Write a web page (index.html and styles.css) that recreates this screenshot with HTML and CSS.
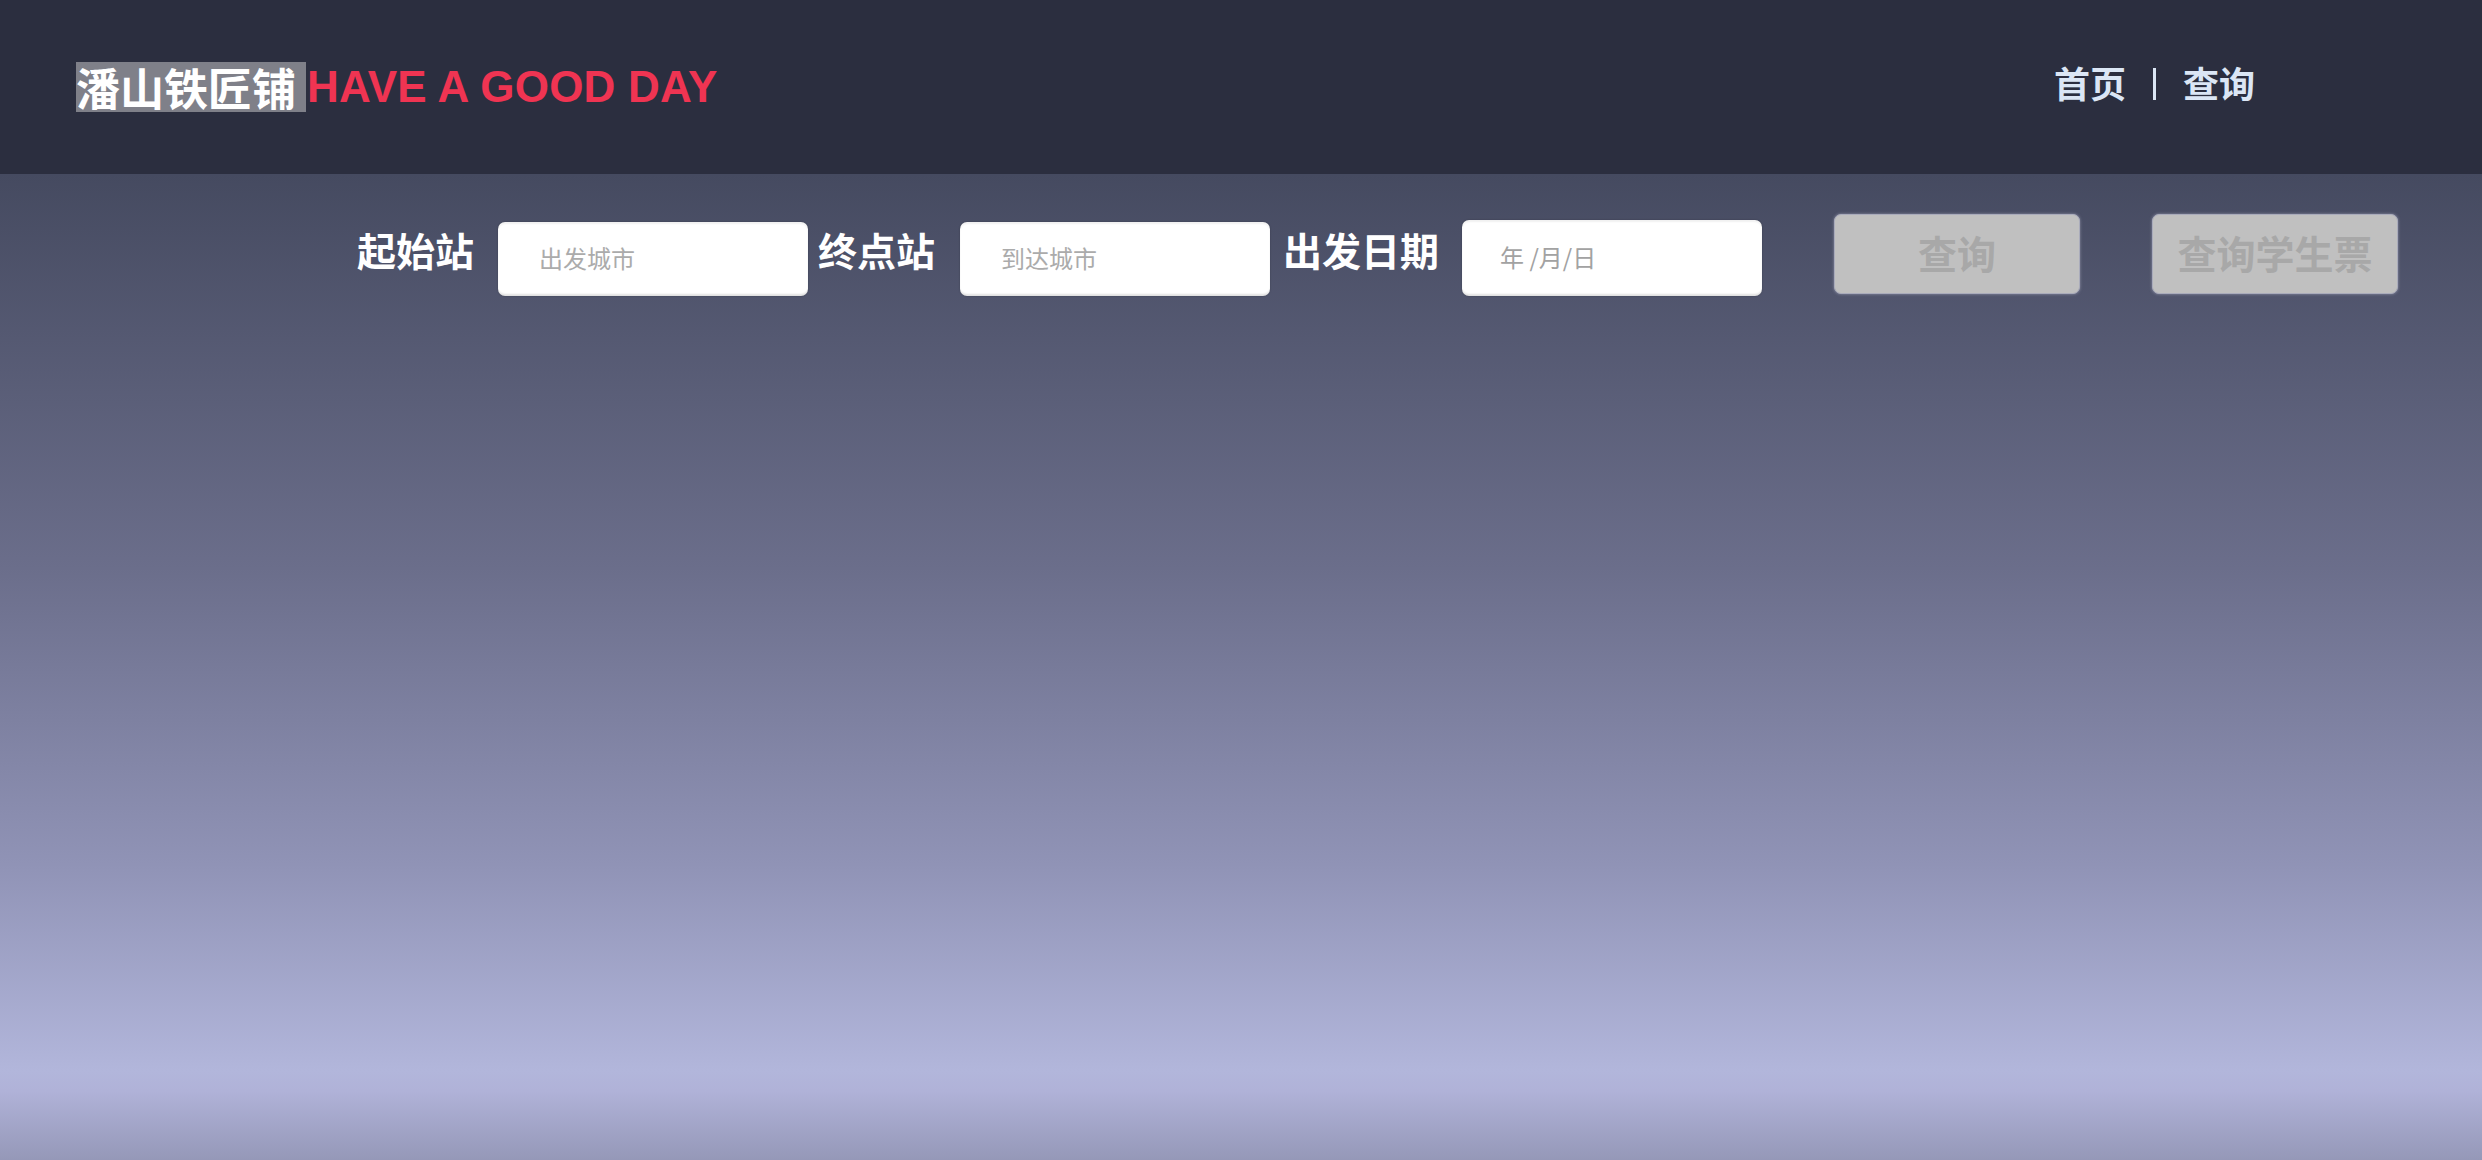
FILE: index.html
```html
<!DOCTYPE html>
<html lang="zh-CN">
<head>
<meta charset="utf-8">
<title>潘山铁匠铺</title>
<link rel="stylesheet" href="styles.css">
</head>
<body>
<header class="topbar">
  <div class="brand">
    <span class="brand-cn">潘山铁匠铺 </span><span class="brand-en">HAVE A GOOD DAY</span>
  </div>
  <nav class="nav">
    <a class="nav-link" href="#">首页</a>
    <span class="nav-sep"></span>
    <a class="nav-link" href="#">查询</a>
  </nav>
</header>
<main class="main">
  <form class="search">
    <label class="label label-from">起始站</label>
    <input class="field field-from" type="text" placeholder="出发城市">
    <label class="label label-to">终点站</label>
    <input class="field field-to" type="text" placeholder="到达城市">
    <label class="label label-date">出发日期</label>
    <input class="field field-date" type="text" placeholder="年 /月/日">
    <button class="btn btn-query" type="button">查询</button>
    <button class="btn btn-student" type="button">查询学生票</button>
  </form>
</main>
</body>
</html>
```

FILE: styles.css
```css
html, body {
  margin: 0;
  padding: 0;
}

body {
  font-family: "Noto Sans CJK SC", "Liberation Sans", sans-serif;
  background: #2b2e3f;
  height: 1160px;
  overflow: hidden;
}

.topbar {
  height: 174px;
  background: #2b2e3f;
  display: flex;
  align-items: center;
  justify-content: space-between;
  padding-left: 76px;
  box-sizing: border-box;
}

.brand {
  display: flex;
  align-items: flex-start;
  height: 50px;
}

.brand-cn {
  display: inline-block;
  height: 50px;
  line-height: 50px;
  font-size: 44px;
  font-weight: 700;
  color: #ffffff;
  background: #7f8089;
  white-space: pre;
  font-family: "Noto Sans CJK SC", sans-serif;
}

.brand-en {
  display: inline-block;
  height: 50px;
  line-height: 50px;
  font-size: 44px;
  font-weight: 700;
  color: #ef3452;
  font-family: "Liberation Sans", Arial, sans-serif;
  letter-spacing: 0.2px;
  margin-left: 1px;
}

.nav {
  display: flex;
  align-items: center;
  width: 428px;
  padding-bottom: 11px;
}

.nav-link {
  font-size: 36px;
  line-height: 36px;
  font-weight: 700;
  color: #dbe6f5;
  text-decoration: none;
}

.nav-sep {
  display: inline-block;
  width: 3px;
  height: 32px;
  background: #dbe6f5;
  margin: 4px 27px 0 27px;
}

.main {
  height: 986px;
  background: linear-gradient(to bottom, #454a60 0%, #6b6e8b 40%, #9093b6 70%, #b2b6db 91%, #b0b2d8 93%, #9598b8 100%);
}

.search {
  display: flex;
  align-items: flex-start;
  padding: 40px 0 0 357px;
  margin: 0;
}

.label {
  margin-top: 15px;
  font-size: 39px;
  line-height: 40px;
  font-weight: 700;
  color: #ffffff;
  white-space: nowrap;
}

.label-from { margin-right: 24px; }
.label-to { margin-left: 10px; margin-right: 25px; }
.label-date { margin-left: 13px; margin-right: 23px; }

.field {
  margin-top: 8px;
  width: 310px;
  height: 74px;
  box-sizing: border-box;
  border: none;
  border-radius: 7px;
  background: #ffffff;
  padding: 0 0 3px 41px;
  font-family: "Noto Sans CJK SC", sans-serif;
  font-size: 24px;
  color: #333;
  outline: none;
  box-shadow: inset 0 -3px 2px -1px rgba(0, 0, 0, 0.12), inset 0 2px 2px rgba(0, 0, 0, 0.06), 0 0 2px rgba(0, 0, 0, 0.25);
}

.field::placeholder {
  color: #ababab;
}

.field-date {
  width: 300px;
  height: 76px;
  margin-top: 6px;
  padding-left: 38px;
}

.field-date::placeholder {
  color: #a2a2a2;
}

.btn {
  width: 246px;
  height: 80px;
  border: 1px solid #a9abbb;
  border-radius: 7px;
  background: #c0c0c0;
  color: #a8a8a8;
  font-family: "Noto Sans CJK SC", sans-serif;
  font-size: 39px;
  font-weight: 700;
  line-height: 40px;
  padding: 0 0 5px 0;
  box-shadow: 0 0 3px rgba(190, 192, 210, 0.6);
}

.btn-query { margin-left: 72px; }
.btn-student { margin-left: 72px; }
```
